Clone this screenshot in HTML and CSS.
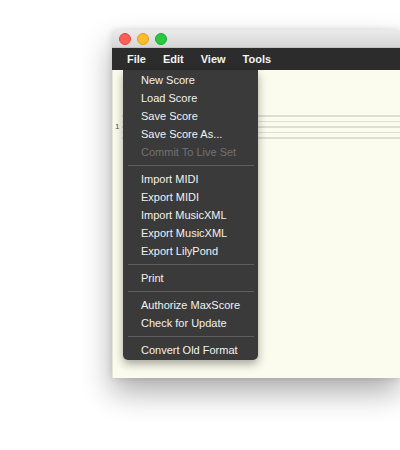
FILE: index.html
```html
<!DOCTYPE html>
<html>
<head>
<meta charset="utf-8">
<link rel="stylesheet" href="styles.css">
</head>
<body>
<div class="stage">
  <div class="window">
    <div class="titlebar">
      <span class="light red"></span>
      <span class="light yellow"></span>
      <span class="light green"></span>
    </div>
    <div class="menubar">
      <span class="menu">File</span>
      <span class="menu">Edit</span>
      <span class="menu">View</span>
      <span class="menu">Tools</span>
    </div>
    <div class="score">
      <div class="system">
        <span class="measure">1</span>
        <div class="staff">
          <span class="line"></span>
          <span class="line"></span>
          <span class="line"></span>
          <span class="line"></span>
          <span class="line"></span>
        </div>
      </div>
    </div>
    <div class="dropdown">
      <div class="item">New Score</div>
      <div class="item">Load Score</div>
      <div class="item">Save Score</div>
      <div class="item">Save Score As...</div>
      <div class="item disabled">Commit To Live Set</div>
      <div class="sep"></div>
      <div class="item">Import MIDI</div>
      <div class="item">Export MIDI</div>
      <div class="item">Import MusicXML</div>
      <div class="item">Export MusicXML</div>
      <div class="item">Export LilyPond</div>
      <div class="sep"></div>
      <div class="item">Print</div>
      <div class="sep"></div>
      <div class="item">Authorize MaxScore</div>
      <div class="item">Check for Update</div>
      <div class="sep"></div>
      <div class="item">Convert Old Format</div>
    </div>
  </div>
</div>
</body>
</html>
```
FILE: styles.css
```css
html, body {
  margin: 0;
  padding: 0;
  background: #ffffff;
  overflow: hidden;
  width: 400px;
  height: 450px;
  font-family: "Liberation Sans", Arial, sans-serif;
}

.stage {
  padding: 30px 0 0 112px;
}

.window {
  position: relative;
  width: 288px;
  height: 348px;
  display: flex;
  flex-direction: column;
  background: #fcfcee;
  box-shadow: 0 14px 30px rgba(0, 0, 0, 0.33), 0 0 6px rgba(0, 0, 0, 0.12);
  border-radius: 4px 0 0 0;
}

.titlebar {
  height: 18px;
  display: flex;
  align-items: center;
  gap: 6px;
  padding-left: 7px;
  background: linear-gradient(#ebebeb, #d6d6d6);
  border-radius: 4px 0 0 0;
  border-bottom: 1px solid #c4c4c4;
  box-sizing: border-box;
}

.light {
  width: 12px;
  height: 12px;
  border-radius: 50%;
  box-sizing: border-box;
}
.red { background: #fc5f57; border: 0.5px solid #e2463f; }
.yellow { background: #fdbc2e; border: 0.5px solid #e1a116; }
.green { background: #28c840; border: 0.5px solid #14ae2a; }

.menubar {
  height: 22px;
  display: flex;
  align-items: center;
  gap: 17px;
  padding-left: 15px;
  background: #2c2c2c;
  color: #f4f4f4;
  font-weight: bold;
  font-size: 11px;
}

.score {
  flex: 1;
  padding-top: 45px;
  border-left: 1px solid #e4e4d8;
}

.system {
  display: flex;
  align-items: center;
}

.measure {
  width: 7px;
  padding-left: 2px;
  font-size: 8px;
  color: #555555;
}

.staff {
  flex: 1;
  display: flex;
  flex-direction: column;
  gap: 4px;
}

.line {
  display: block;
  height: 1.5px;
  background: #dedfd2;
}

.dropdown {
  position: absolute;
  left: 11px;
  top: 40px;
  width: 135px;
  padding-top: 1px;
  padding-bottom: 1px;
  background: #3a3a3a;
  border-radius: 0 0 5px 5px;
  box-shadow: 0 4px 10px rgba(0, 0, 0, 0.35);
  color: #f2f2f2;
  font-size: 11px;
}

.item {
  height: 18px;
  line-height: 18px;
  padding-left: 18px;
  white-space: nowrap;
}

.item.disabled {
  color: #727272;
}

.sep {
  height: 1px;
  margin: 4px 4px 4px 5px;
  background: #5e5e5e;
}
```
